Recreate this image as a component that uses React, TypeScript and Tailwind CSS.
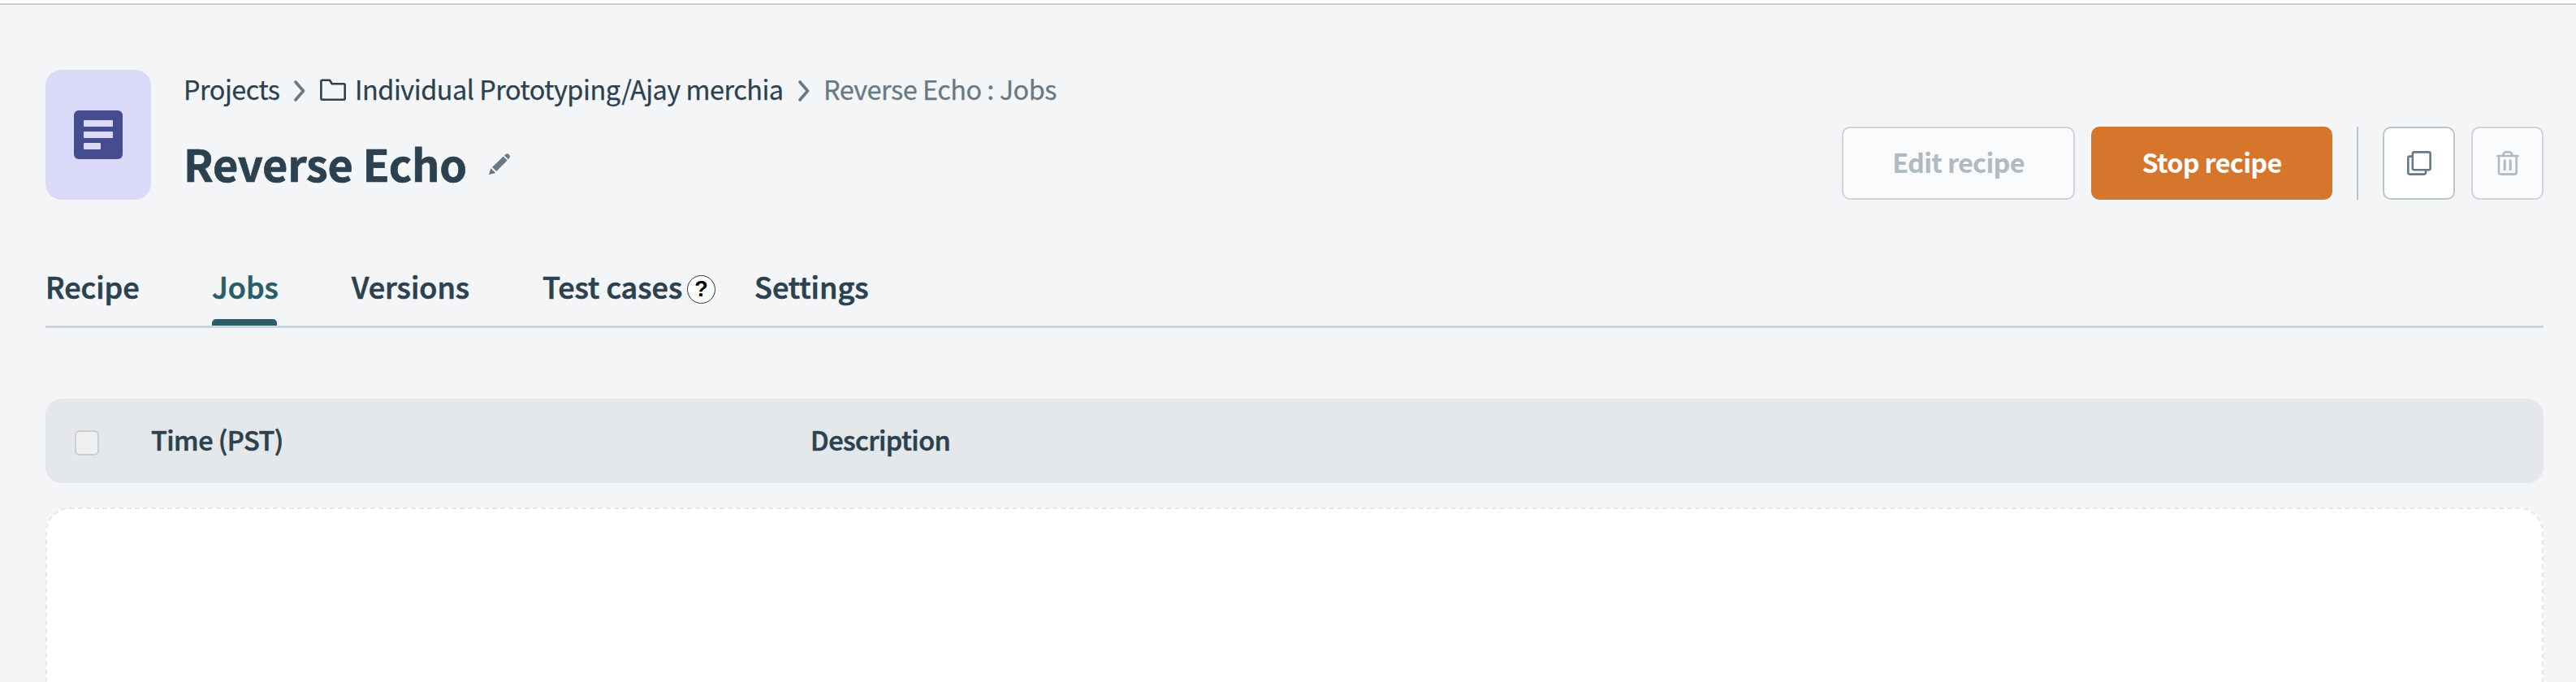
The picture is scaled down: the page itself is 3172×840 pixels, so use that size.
import React from "react";

const Chevron = () => (
  <svg className="h-[46px] w-[14px] shrink-0" viewBox="0 0 14 46" fill="none" stroke="#677984" strokeWidth="3.6" strokeLinecap="round" strokeLinejoin="round">
    <path d="M2 15L11.500 26L2 37" />
  </svg>
);

export default function App() {
  return (
    <div className="flex h-[840px] w-[3172px] flex-col overflow-hidden bg-[#f3f5f7] font-['Noto_Sans_CJK_SC','Noto_Sans',sans-serif] text-[#2b414f]">
      <div className="h-[6px] shrink-0 border-b-2 border-[#ccc] bg-white" />
      <header className="ml-[56px] mr-[40px] mt-[80px] flex h-[160px] shrink-0">
        <div className="flex h-[160px] w-[130px] items-center justify-center rounded-[20px] bg-[#dad9f8]">
          <div className="flex h-[60px] w-[60px] flex-col gap-[6px] rounded-[6px] bg-[#454d90] px-[12px] pt-[12px]">
            <div className="h-[8px] w-[36px] rounded-[1px] bg-[#dad9f8]" />
            <div className="h-[8px] w-[36px] rounded-[1px] bg-[#dad9f8]" />
            <div className="h-[8px] w-[21px] rounded-[1px] bg-[#dad9f8]" />
          </div>
        </div>
        <div className="ml-[40px] flex flex-1 flex-col">
          <nav className="flex h-[46px] whitespace-nowrap text-[32.4px] leading-[46px] tracking-[-0.48px] [-webkit-text-stroke:0.25px_currentColor]">
            <span className="w-[136px]">Projects</span>
            <Chevron />
            <svg className="ml-[18px] h-[46px] w-[32px]" viewBox="0 0 32 46" fill="none" stroke="#2b414f" strokeWidth="2.600" strokeLinejoin="round">
              <path d="M1.400 35.500V14.200Q1.400 12.700 2.900 12.700H12L14.800 17.300H29.200Q30.700 17.300 30.700 18.800V35.200Q30.700 36.700 29.200 36.700H2.900Q1.400 36.700 1.400 35.200Z" />
            </svg>
            <span className="ml-[11px] w-[546px]">Individual Prototyping/Ajay merchia</span>
            <Chevron />
            <span className="ml-[17px] text-[#677984]">Reverse Echo : Jobs</span>
          </nav>
          <div className="mt-[29px] flex h-[80px] items-center">
            <h1 className="w-[376px] whitespace-nowrap text-[54px] font-bold leading-[80px] tracking-[-0.3px] [-webkit-text-stroke:0.7px_currentColor]">Reverse Echo</h1>
            <svg className="mt-[2px] h-[26px] w-[26px]" viewBox="0 0 26 26" fill="#677984">
              <path d="M0 26L2.300 18.300L8.200 24ZM4 17L17.700 3.800L22.700 8.500L9.300 22ZM19 2.600L20.500 1.200Q22.500-.8 24.800 1.400Q27 3.800 25 5.800L23.800 7.200Z" />
            </svg>
          </div>
        </div>
        <div className="mt-[70px] flex h-[90px] whitespace-nowrap text-[32.4px] font-bold leading-[82px] tracking-[-0.7px]">
          <button className="flex w-[287px] justify-center rounded-[10px] border-2 border-[#ced4da] bg-[#fafbfd] text-[#b0bac1]">Edit recipe</button>
          <button className="ml-[20px] flex w-[297px] justify-center rounded-[10px] border-2 border-[#d6762d] bg-[#d6762d] text-white">Stop recipe</button>
          <div className="ml-[30px] w-[2px] bg-[#bac4cc]" />
          <button className="ml-[30px] flex w-[89px] items-center justify-center rounded-[10px] border-2 border-[#bac4cc] bg-white">
            <svg width="30" height="30" viewBox="0 0 30 30" fill="none" stroke="#677984" strokeWidth="2.600">
              <rect x="6.800" y="1.400" width="21.800" height="21.800" rx="2" />
              <path d="M6.800 6.600H3.300Q1.300 6.600 1.300 8.600V26.600Q1.300 28.600 3.300 28.600H21Q23 28.600 23 26.600V23.500" />
            </svg>
          </button>
          <button className="ml-[20px] flex w-[89px] items-center justify-center rounded-[10px] border-2 border-[#ced4da] bg-[#fafbfd]">
            <svg width="28" height="30" viewBox="0 0 28 30" fill="none" stroke="#b0bac1" strokeWidth="2.600" strokeLinecap="round">
              <path d="M1.300 6H26.500M3 6V26.600Q3 28.600 5 28.600H22.600Q24.600 28.600 24.600 26.600V6M7.800 6L9 3Q9.700 1.300 11.500 1.300H16Q17.900 1.300 18.600 3L19.800 6" />
              <path d="M10.200 10.500V24M17.200 10.500V24" strokeWidth="3" strokeLinecap="butt" />
            </svg>
          </button>
        </div>
      </header>
      <nav className="ml-[56px] mr-[40px] mt-[76px] flex h-[82px] shrink-0 whitespace-nowrap border-b-[3px] border-[#ced4da] text-[36px] font-medium leading-[60px] [-webkit-text-stroke:0.7px_currentColor]">
        <span className="w-[205px]">Recipe</span>
        <span className="flex w-[172px] flex-col text-[#285e67]">
          Jobs
          <span className="mt-[11px] h-[8px] w-[80px] rounded-t-[5px] bg-[#285e67]" />
        </span>
        <span className="w-[235px]">Versions</span>
        <span className="w-[178px]">Test cases</span>
        <span className="mt-[17px] flex h-[35px] w-[35px] items-center justify-center rounded-full border border-[#333] bg-white font-['Liberation_Sans',sans-serif] text-[27px] font-bold leading-[33px] text-black [-webkit-text-stroke:0px]">?</span>
        <span className="ml-[48px]">Settings</span>
      </nav>
      <section className="ml-[56px] mr-[40px] mt-[87px] flex h-[104px] shrink-0 items-center rounded-[20px] bg-[#e4e8ea] text-[32.4px] font-medium tracking-[-0.5px] [-webkit-text-stroke:0.6px_currentColor]">
        <div className="ml-[36px] mt-[5px] h-[31px] w-[30px] rounded-[6px] border-2 border-[#ccc] bg-[#eff0f2]" />
        <span className="mb-[4px] ml-[64px] w-[812px]">Time (PST)</span>
        <span className="mb-[4px]">Description</span>
      </section>
      <section className="ml-[56px] mr-[40px] mt-[30px] h-[300px] shrink-0 rounded-[30px] border-2 border-dashed border-[#e4e8ea] bg-white" />
    </div>
  );
}
